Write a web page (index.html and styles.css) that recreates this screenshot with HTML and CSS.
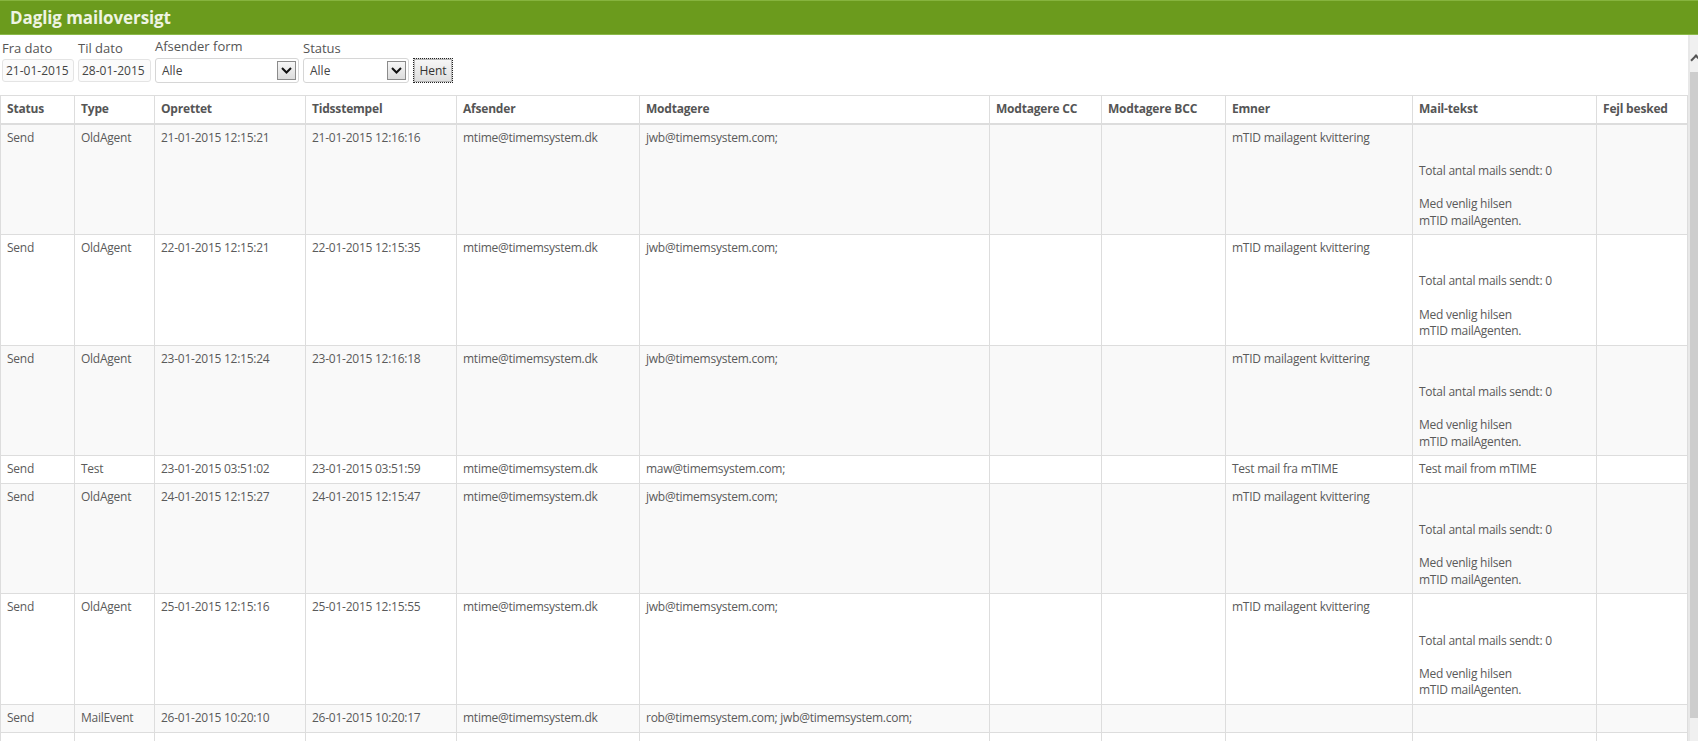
FILE: index.html
```html
<!DOCTYPE html>
<html lang="da">
<head>
<meta charset="utf-8">
<title>Daglig mailoversigt</title>
<link rel="stylesheet" href="styles.css">
</head>
<body>
<div class="page">
  <header class="titlebar"><h1>Daglig mailoversigt</h1></header>
  <div class="body">
    <main class="content">
      <form class="filters">
        <div class="field">
          <span class="label">Fra dato</span>
          <div class="input w-fra">21-01-2015</div>
        </div>
        <div class="field">
          <span class="label">Til dato</span>
          <div class="input w-til">28-01-2015</div>
        </div>
        <div class="field field-select">
          <span class="label">Afsender form</span>
          <div class="select w-afs"><span class="sel-text">Alle</span><span class="sel-arrow"><svg width="11" height="7" viewBox="0 0 11 7"><path d="M1 1 L5.5 5.5 L10 1" fill="none" stroke="#111" stroke-width="2"/></svg></span></div>
        </div>
        <div class="field">
          <span class="label">Status</span>
          <div class="select w-status"><span class="sel-text">Alle</span><span class="sel-arrow"><svg width="11" height="7" viewBox="0 0 11 7"><path d="M1 1 L5.5 5.5 L10 1" fill="none" stroke="#111" stroke-width="2"/></svg></span></div>
        </div>
        <div class="field field-btn">
          <button type="button" class="btn">Hent</button>
        </div>
      </form>

      <table class="grid">
        <colgroup>
          <col class="c1"><col class="c2"><col class="c3"><col class="c4"><col class="c5"><col class="c6"><col class="c7"><col class="c8"><col class="c9"><col class="c10"><col class="c11">
        </colgroup>
        <thead>
          <tr><th>Status</th><th>Type</th><th>Oprettet</th><th>Tidsstempel</th><th>Afsender</th><th>Modtagere</th><th>Modtagere CC</th><th>Modtagere BCC</th><th>Emner</th><th>Mail-tekst</th><th>Fejl besked</th></tr>
        </thead>
        <tbody>
          <tr><td>Send</td><td>OldAgent</td><td>21-01-2015 12:15:21</td><td>21-01-2015 12:16:16</td><td>mtime@timemsystem.dk</td><td>jwb@timemsystem.com;</td><td></td><td></td><td>mTID mailagent kvittering</td><td class="mail"><br><br>Total antal mails sendt: 0<br><br>Med venlig hilsen<br>mTID mailAgenten.</td><td></td></tr>
          <tr><td>Send</td><td>OldAgent</td><td>22-01-2015 12:15:21</td><td>22-01-2015 12:15:35</td><td>mtime@timemsystem.dk</td><td>jwb@timemsystem.com;</td><td></td><td></td><td>mTID mailagent kvittering</td><td class="mail"><br><br>Total antal mails sendt: 0<br><br>Med venlig hilsen<br>mTID mailAgenten.</td><td></td></tr>
          <tr><td>Send</td><td>OldAgent</td><td>23-01-2015 12:15:24</td><td>23-01-2015 12:16:18</td><td>mtime@timemsystem.dk</td><td>jwb@timemsystem.com;</td><td></td><td></td><td>mTID mailagent kvittering</td><td class="mail"><br><br>Total antal mails sendt: 0<br><br>Med venlig hilsen<br>mTID mailAgenten.</td><td></td></tr>
          <tr><td>Send</td><td>Test</td><td>23-01-2015 03:51:02</td><td>23-01-2015 03:51:59</td><td>mtime@timemsystem.dk</td><td>maw@timemsystem.com;</td><td></td><td></td><td>Test mail fra mTIME</td><td>Test mail from mTIME</td><td></td></tr>
          <tr><td>Send</td><td>OldAgent</td><td>24-01-2015 12:15:27</td><td>24-01-2015 12:15:47</td><td>mtime@timemsystem.dk</td><td>jwb@timemsystem.com;</td><td></td><td></td><td>mTID mailagent kvittering</td><td class="mail"><br><br>Total antal mails sendt: 0<br><br>Med venlig hilsen<br>mTID mailAgenten.</td><td></td></tr>
          <tr><td>Send</td><td>OldAgent</td><td>25-01-2015 12:15:16</td><td>25-01-2015 12:15:55</td><td>mtime@timemsystem.dk</td><td>jwb@timemsystem.com;</td><td></td><td></td><td>mTID mailagent kvittering</td><td class="mail"><br><br>Total antal mails sendt: 0<br><br>Med venlig hilsen<br>mTID mailAgenten.</td><td></td></tr>
          <tr><td>Send</td><td>MailEvent</td><td>26-01-2015 10:20:10</td><td>26-01-2015 10:20:17</td><td>mtime@timemsystem.dk</td><td>rob@timemsystem.com; jwb@timemsystem.com;</td><td></td><td></td><td></td><td></td><td></td></tr>
          <tr><td>&nbsp;</td><td></td><td></td><td></td><td></td><td></td><td></td><td></td><td></td><td></td><td></td></tr>
        </tbody>
      </table>
    </main>
    <div class="scrollbar">
      <span class="sb-arrow"></span>
      <div class="sb-thumb"></div>
    </div>
  </div>
</div>
</body>
</html>
```

FILE: styles.css
```css
* { box-sizing: border-box; }
html, body { margin: 0; padding: 0; }
body {
  font-family: "Open Sans", "Liberation Sans", sans-serif;
  font-size: 12px;
  color: #555;
  background: #fff;
}
.page {
  width: 1698px;
  height: 741px;
  overflow: hidden;
  display: flex;
  flex-direction: column;
}
.titlebar {
  height: 35px;
  flex: 0 0 35px;
  background: #6b9b1d;
  border-top: 1px solid #86b43e;
  border-bottom: 1px solid #8bb94a;
  display: flex;
  align-items: center;
}
.titlebar h1 {
  margin: 0;
  padding-left: 10px;
  font-size: 17px;
  font-weight: 700;
  color: #eef4e2;
  line-height: 20px;
  letter-spacing: -0.1px;
}
.body {
  flex: 1;
  display: flex;
  min-height: 0;
}
.content {
  flex: 0 0 1688px;
  width: 1688px;
  overflow: hidden;
}
.scrollbar {
  flex: 0 0 10px;
  background: #f0f0f0;
  border-left: 2px solid #e8e8e8;
  display: flex;
  flex-direction: column;
  align-items: stretch;
}
.sb-arrow {
  display: block;
  height: 37px;
  position: relative;
}
.sb-arrow::before {
  content: "";
  position: absolute;
  left: 2px;
  top: 21px;
  width: 6px;
  height: 6px;
  border-top: 2px solid #555;
  border-left: 2px solid #555;
  transform: rotate(45deg);
}
.sb-thumb {
  height: 646px;
  background: #cdcdcd;
}

/* filters */
.filters {
  display: flex;
  align-items: flex-start;
  gap: 4px;
  padding: 4px 0 0 2px;
}
.field {
  display: flex;
  flex-direction: column;
}
.label {
  font-size: 13px;
  line-height: 18px;
  height: 19px;
  color: #555;
}
.field-select .label { margin-top: -2px; margin-bottom: 2px; }
.field-btn { padding-top: 19px; }
.input {
  height: 23px;
  margin-top: 1px;
  border: 1px solid #e4e4e4;
  border-radius: 3px;
  background: #fbfbfb;
  padding: 0 3px;
  font-size: 12px;
  line-height: 21px;
  color: #444;
}
.w-fra { width: 72px; }
.w-til { width: 73px; }
.select {
  height: 25px;
  border: 1px solid #d6d6d6;
  border-radius: 3px;
  background: #fff;
  display: flex;
  align-items: center;
  justify-content: space-between;
  padding: 0 2px 0 6px;
  font-size: 12px;
  color: #444;
}
.w-afs { width: 144px; }
.w-status { width: 106px; }
.sel-arrow {
  width: 19px;
  height: 19px;
  border: 1px solid #8b8b8b;
  background: linear-gradient(#f6f6f6, #dcdcdc);
  display: flex;
  align-items: center;
  justify-content: center;
}
.btn {
  width: 40px;
  height: 25px;
  padding: 0;
  font-family: "Open Sans", "Liberation Sans", sans-serif;
  font-size: 12px;
  color: #333;
  border: 1px dotted #222;
  border-radius: 0;
  box-shadow: inset 0 0 0 1px #b5b5b5;
  background: linear-gradient(#f7f7f7, #dedede);
}

/* table */
.grid {
  margin-top: 12px;
  width: 1687px;
  table-layout: fixed;
  border-collapse: collapse;
}
.c1 { width: 74px; }
.c2 { width: 80px; }
.c3 { width: 151px; }
.c4 { width: 151px; }
.c5 { width: 183px; }
.c6 { width: 350px; }
.c7 { width: 112px; }
.c8 { width: 124px; }
.c9 { width: 187px; }
.c10 { width: 184px; }
.c11 { width: 91px; }
.grid th, .grid td {
  border: 1px solid #dddddd;
  padding: 5px 5px 5px 6px;
  text-align: left;
  vertical-align: top;
  line-height: 16.6px;
  white-space: nowrap;
  overflow: hidden;
}
.grid th {
  font-weight: 700;
  color: #555;
  border-bottom: 2px solid #dddddd;
  letter-spacing: -0.2px;
}
.grid td {
  color: #5a5a5a;
  letter-spacing: -0.25px;
}
.grid tbody tr:nth-child(odd) td { background: #f9f9f9; }
```
